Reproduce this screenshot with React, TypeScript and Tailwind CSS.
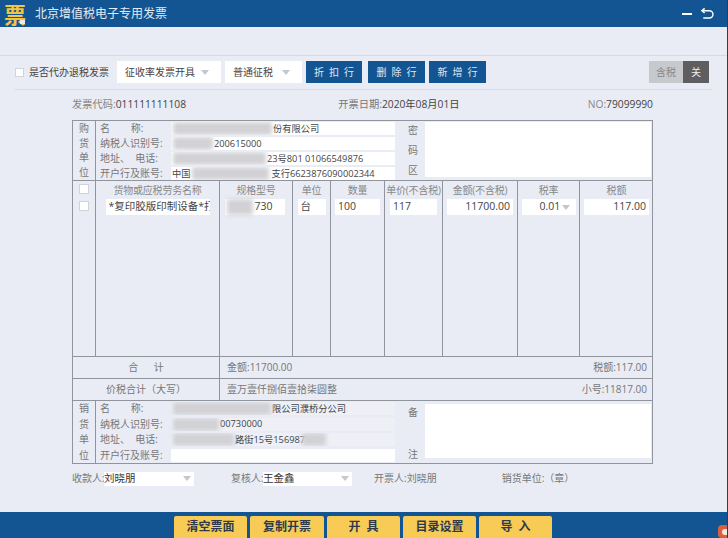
const font = { fontFamily: '"Open Sans", "Noto Sans CJK SC", sans-serif' }

const Caret = () => (
  <span className="ml-auto shrink-0 w-0 h-0 border-x-[4px] border-x-transparent border-t-[5px] border-t-[#c3c7cf]" />
)

const Select = ({ w, text }: { w: string; text: string }) => (
  <div className={`${w} h-[22px] bg-white flex items-center pl-2 pr-3 text-[10px] text-[#444] whitespace-nowrap`}>
    {text}
    <Caret />
  </div>
)

const ToolButton = ({ text, w }: { text: string; w: string }) => (
  <div className={`${w} h-[22px] bg-[#125592] text-[#dfe8f2] text-[10px] tracking-[5px] pl-[5px] flex items-center justify-center whitespace-nowrap`}>
    {text}
  </div>
)

const Blur = ({ left, width }: { left: string; width: string }) => (
  <div className={`absolute top-0 bottom-0 ${left} ${width} bg-[#d2d2d6] blur-[2px]`} />
)

type PartyRow = {
  label: string
  value?: string
  indent?: string
  tail?: string
  tailIndent?: string
  blur?: string
  blurLeft?: string
  blur2?: string
  blur2Left?: string
  white?: boolean
}

const PartyField = ({ row }: { row: PartyRow }) => (
  <div className="flex items-center h-[15px]">
    <div className="w-[75px] pl-[4px] text-[10px] text-[#777] whitespace-pre shrink-0">{row.label}</div>
    <div
      className={`relative overflow-hidden w-[224px] h-[13px] flex items-center text-[9.25px] text-[#444] whitespace-pre ${row.white ? 'bg-white' : 'bg-[#eef0f6]'}`}
    >
      {row.value && <span className={row.indent}>{row.value}</span>}
      {row.tail && <span className={row.tailIndent}>{row.tail}</span>}
      {row.blur && <Blur left={row.blurLeft ?? 'left-[2px]'} width={row.blur} />}
      {row.blur2 && <Blur left={row.blur2Left ?? 'left-0'} width={row.blur2} />}
    </div>
  </div>
)

const buyer: PartyRow[] = [
  { label: '名        称:', value: '份有限公司', indent: 'ml-[102px]', blur: 'w-[99px]', white: true },
  { label: '纳税人识别号:', value: '200615000', indent: 'ml-[43px]', blur: 'w-[40px]', white: true },
  { label: '地址、  电话:', value: '23号801 01066549876', indent: 'ml-[96px]', blur: 'w-[93px]', white: true },
  {
    label: '开户行及账号:',
    value: '中国',
    indent: 'ml-[1px]',
    tail: '支行6623876090002344',
    tailIndent: 'ml-[81px]',
    blur: 'w-[77px]',
    blurLeft: 'left-[21px]',
    white: true,
  },
]

const seller: PartyRow[] = [
  { label: '名        称:', value: '限公司濮桥分公司', indent: 'ml-[101px]', blur: 'w-[98px]' },
  { label: '纳税人识别号:', value: '00730000', indent: 'ml-[49px]', blur: 'w-[46px]' },
  {
    label: '地址、  电话:',
    value: '路街15号156987',
    indent: 'ml-[64px]',
    blur: 'w-[61px]',
    blur2: 'w-[24px]',
    blur2Left: 'left-[131px]',
  },
  { label: '开户行及账号:', white: true },
]

const SideLabel = ({ chars, w }: { chars: string[]; w: string }) => (
  <div className={`${w} shrink-0 flex flex-col justify-around items-center text-[10px] leading-[13px] text-[#777]`}>
    {chars.map((c) => (
      <span key={c}>{c}</span>
    ))}
  </div>
)

const ItemInput = ({ w, children, align }: { w: string; children: React.ReactNode; align?: string }) => (
  <div className={`${w} h-[16px] bg-white flex items-center px-[3px] text-[10.5px] text-[#444] whitespace-nowrap overflow-hidden ${align ?? ''}`}>
    {children}
  </div>
)

const ItemCol = ({
  title,
  className,
  children,
}: {
  title: string
  className?: string
  children: React.ReactNode
}) => (
  <div className={`border-r border-[#90949c] flex flex-col items-center ${className ?? ''}`}>
    <div className="h-[18px] flex items-center text-[10px] tracking-[-0.2px] text-[#888] whitespace-nowrap">{title}</div>
    {children}
  </div>
)

const footerButtons = [
  { t: '清空票面', w: 'w-[73px]' },
  { t: '复制开票', w: 'w-[74px]' },
  { t: '开  具', w: 'w-[73px]' },
  { t: '目录设置', w: 'w-[73px]' },
  { t: '导  入', w: 'w-[73px]' },
]

export default function App() {
  return (
    <div className="w-[728px] h-[538px] overflow-hidden flex flex-col bg-[#e9ecf5] border-r border-[#3a3a3a]" style={font}>
      <header className="h-[27px] bg-[#125592] flex items-center shrink-0">
        <div className="relative w-[24px] ml-[3px] h-[27px] flex items-center justify-center text-[22px] leading-none font-bold text-[#f1c542]">
          票
          <div className="absolute right-[2px] bottom-[3px] w-[5px] h-[4px] bg-[#e8ecf0]" />
        </div>
        <div className="ml-[8px] text-[12px] text-[#e4ebf3]">北京增值税电子专用发票</div>
        <div className="ml-auto mr-[13px] flex items-center gap-[8px]">
          <div className="w-[10px] h-[2px] bg-white" />
          <svg width="14" height="14" viewBox="0 0 15 15" fill="none" stroke="white" strokeWidth="1.5">
            <path d="M5 1.5 2 4l3 2.5" />
            <path d="M2.5 4H10a3.4 3.4 0 0 1 0 7.8H3.5" />
          </svg>
        </div>
      </header>

      <div className="h-[29px] border-b border-[#d6d9e1] shrink-0" />

      <div className="h-[34px] mx-[15px] w-[697px] border-b border-[#d6d9e1] flex items-center pb-[1px] shrink-0">
        <div className="w-[9px] h-[9px] bg-white border border-[#d0d3da]" />
        <span className="ml-[5px] w-[88px] text-[10px] text-[#444] whitespace-nowrap">是否代办退税发票</span>
        <Select w="w-[104px]" text="征收率发票开具" />
        <div className="w-[4px]" />
        <Select w="w-[77px]" text="普通征税" />
        <div className="w-[4px]" />
        <ToolButton w="w-[56px]" text="折扣行" />
        <div className="w-[6px]" />
        <ToolButton w="w-[57px]" text="删除行" />
        <div className="w-[4px]" />
        <ToolButton w="w-[57px]" text="新增行" />
        <div className="ml-auto mr-[3px] flex text-[10px]">
          <div className="w-[34px] h-[22px] bg-[#c8c9cc] text-[#888] flex items-center justify-center">含税</div>
          <div className="w-[26px] h-[22px] bg-[#5e5e60] text-[#eee] flex items-center justify-center">关</div>
        </div>
      </div>

      <div className="h-[30px] w-[581px] ml-[72px] flex items-center justify-between text-[10.25px] text-[#444] shrink-0">
        <span>
          <span className="text-[#8a8378]">发票代码:</span>011111111108
        </span>
        <span className="ml-[24px]">
          <span className="text-[#777]">开票日期:</span>2020年08月01日
        </span>
        <span>
          <span className="text-[#888]">NO:</span>79099990
        </span>
      </div>

      <div className="w-[581px] ml-[72px] border border-[#90949c] flex flex-col shrink-0">
        <div className="h-[60px] flex border-b border-[#90949c]">
          <SideLabel w="w-[23px] border-r border-[#90949c]" chars={['购', '货', '单', '位']} />
          <div className="w-[305px] flex flex-col justify-around">
            {buyer.map((r) => (
              <PartyField key={r.label} row={r} />
            ))}
          </div>
          <SideLabel w="w-[24px]" chars={['密', '码', '区']} />
          <div className="flex-1 bg-white mt-[1px] mb-[3px] mr-[1px]" />
        </div>

        <div className="h-[175px] grid grid-cols-[23px_124px_73px_38px_54px_58px_75px_62px_73px]">
          <div className="border-r border-[#90949c] flex flex-col items-center gap-[7px] pt-[3px]">
            <div className="w-[10px] h-[10px] bg-white border border-[#d0d3da]" />
            <div className="w-[10px] h-[10px] bg-white border border-[#d0d3da]" />
          </div>
          <ItemCol title="货物或应税劳务名称">
            <ItemInput w="w-[104px]" align="text-[9.75px]">*复印胶版印制设备*打印</ItemInput>
          </ItemCol>
          <ItemCol title="规格型号">
            <div className="relative w-[60px] h-[16px] ml-[-3px]">
              <ItemInput w="w-[60px]">
                <span className="ml-[27px]">730</span>
              </ItemInput>
              <Blur left="left-[2px]" width="w-[26px]" />
            </div>
          </ItemCol>
          <ItemCol title="单位">
            <ItemInput w="w-[28px]">台</ItemInput>
          </ItemCol>
          <ItemCol title="数量">
            <ItemInput w="w-[45px]">100</ItemInput>
          </ItemCol>
          <ItemCol title="单价(不含税)">
            <ItemInput w="w-[47px]">117</ItemInput>
          </ItemCol>
          <ItemCol title="金额(不含税)">
            <ItemInput w="w-[66px]" align="justify-end">11700.00</ItemInput>
          </ItemCol>
          <ItemCol title="税率">
            <div className="w-[54px] h-[16px] bg-white flex items-center pl-[18px] pr-[6px] text-[10.5px] text-[#444]">
              0.01
              <Caret />
            </div>
          </ItemCol>
          <div className="flex flex-col items-center">
            <div className="h-[18px] flex items-center text-[10px] text-[#888]">税额</div>
            <ItemInput w="w-[65px]" align="justify-end">117.00</ItemInput>
          </div>
        </div>

        <div className="h-[22px] flex border-t border-[#90949c] text-[10px] text-[#777]">
          <div className="w-[147px] border-r border-[#90949c] flex items-center justify-center whitespace-pre">合      计</div>
          <div className="flex-1 flex items-center justify-between pl-[7px] pr-[5px]">
            <span>金额:11700.00</span>
            <span>税额:117.00</span>
          </div>
        </div>

        <div className="h-[22px] flex border-t border-[#90949c] text-[10px] text-[#777]">
          <div className="w-[147px] border-r border-[#90949c] flex items-center justify-center whitespace-pre">价税合计（大写）</div>
          <div className="flex-1 flex items-center justify-between pl-[7px] pr-[5px]">
            <span>壹万壹仟捌佰壹拾柒圆整</span>
            <span>小号:11817.00</span>
          </div>
        </div>

        <div className="h-[63px] flex border-t border-[#90949c]">
          <SideLabel w="w-[23px] border-r border-[#90949c]" chars={['销', '货', '单', '位']} />
          <div className="w-[305px] flex flex-col justify-around">
            {seller.map((r) => (
              <PartyField key={r.label} row={r} />
            ))}
          </div>
          <div className="w-[24px] shrink-0 flex flex-col justify-between items-center pt-[4px] pb-[1px] text-[10px] text-[#777]">
            <span>备</span>
            <span>注</span>
          </div>
          <div className="flex-1 bg-white mt-[3px] mb-[5px] mr-[1px]" />
        </div>
      </div>

      <div className="h-[28px] w-[581px] ml-[72px] pt-[1px] flex items-center text-[10px] text-[#777] shrink-0">
        <span className="w-[32px] whitespace-nowrap">收款人:</span>
        <div className="w-[90px] h-[14px] bg-white flex items-center pr-[3px] text-[10.5px] text-[#333]">
          刘晓朋
          <Caret />
        </div>
        <span className="ml-[37px] w-[32px] whitespace-nowrap">复核人:</span>
        <div className="w-[89px] h-[14px] bg-white flex items-center pr-[3px] text-[10.5px] text-[#333]">
          王金鑫
          <Caret />
        </div>
        <span className="ml-[22px] whitespace-nowrap">开票人:刘晓朋</span>
        <span className="ml-[65px] whitespace-pre">销货单位:（章）</span>
      </div>

      <div className="flex-1" />

      <footer className="relative h-[26px] bg-[#125592] flex items-end pl-[174px] gap-[3px] shrink-0 text-[12px] font-bold text-[#2d3a4a]">
        {footerButtons.map((b) => (
          <div key={b.t} className={`${b.w} h-[22px] bg-[#f7cb56] rounded-t-[2px] flex items-center justify-center whitespace-pre`}>
            {b.t}
          </div>
        ))}
        <div className="absolute right-0 bottom-0 w-[9px] h-[13px] bg-[#d9603f] rounded-l-[4px] flex items-center justify-end">
          <div className="w-[5px] h-[6px] bg-[#f8e8d8] rounded-l-[3px]" />
        </div>
      </footer>
    </div>
  )
}
